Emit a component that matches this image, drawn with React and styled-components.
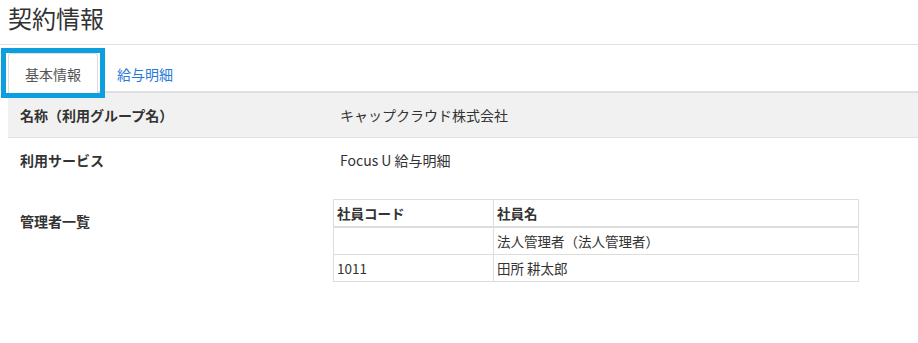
import styled, { createGlobalStyle } from 'styled-components'

const GlobalStyle = createGlobalStyle`
    body {
        margin: 0;
        background: #ffffff;
        font-family: "Noto Sans CJK JP", "Noto Sans", sans-serif;
        color: #333333;
    }
`

const admins = [
    { code: '', name: '法人管理者（法人管理者）' },
    { code: '1011', name: '田所 耕太郎' },
]

const App = () => {
    return (
        <Page>
            <GlobalStyle />
            <Title>契約情報</Title>
            <Body>
                <TabBar>
                    <Tab $active>基本情報</Tab>
                    <Tab>給与明細</Tab>
                </TabBar>
                <Row $shaded>
                    <Label>名称（利用グループ名）</Label>
                    <Value>キャップクラウド株式会社</Value>
                </Row>
                <Row>
                    <Label>利用サービス</Label>
                    <Value>Focus U 給与明細</Value>
                </Row>
                <Row $top>
                    <Label $offset>管理者一覧</Label>
                    <TableCell>
                        <AdminTable>
                            <thead>
                                <tr>
                                    <Th $code>社員コード</Th>
                                    <Th>社員名</Th>
                                </tr>
                            </thead>
                            <tbody>
                                {admins.map((a, i) => (
                                    <tr key={i}>
                                        <Td>{a.code}</Td>
                                        <Td>{a.name}</Td>
                                    </tr>
                                ))}
                            </tbody>
                        </AdminTable>
                    </TableCell>
                </Row>
            </Body>
        </Page>
    )
}

export default App

const Page = styled.div`
    width: 918px;
    min-height: 343px;
    overflow: hidden;
`

const Title = styled.h1`
    margin: 0;
    padding: 0 0 8px 8px;
    font-size: 24px;
    font-weight: 400;
    line-height: 36px;
    color: #333333;
    border-bottom: 1px solid #e0e0e0;
`

const Body = styled.div`
    padding-left: 8px;
`

const TabBar = styled.div`
    display: flex;
    align-items: flex-end;
    gap: 2px;
    height: 38px;
    padding-top: 8px;
    border-bottom: 2px solid #dfdfe1;
`

const Tab = styled.div`
    position: relative;
    box-sizing: border-box;
    height: 40px;
    margin-bottom: -2px;
    padding: 0 16px;
    display: flex;
    align-items: center;
    font-size: 14px;
    color: ${p => (p.$active ? '#555555' : '#2a7bd6')};
    background: ${p => (p.$active ? '#ffffff' : 'transparent')};
    border: 1px solid ${p => (p.$active ? '#dddddd' : 'transparent')};
    border-bottom: none;
    border-radius: 3px 3px 0 0;

    ${p => p.$active && `
        &::after {
            content: '';
            position: absolute;
            top: -6px;
            left: -8px;
            right: -8px;
            bottom: -5px;
            border: 5px solid #0c9fdd;
        }
    `}
`

const Row = styled.div`
    display: grid;
    grid-template-columns: 325px 1fr;
    align-items: ${p => (p.$top ? 'start' : 'center')};
    background: ${p => (p.$shaded ? '#f1f1f1' : '#ffffff')};
    border-bottom: 1px solid ${p => (p.$shaded ? '#e1e1e1' : 'transparent')};
    min-height: 44px;
`

const Label = styled.div`
    padding: ${p => (p.$offset ? '28px' : '12px')} 12px 12px;
    font-size: 14px;
    font-weight: 700;
    line-height: 20px;
    color: #333333;
`

const Value = styled.div`
    padding: 12px 7px;
    font-size: 14px;
    line-height: 20px;
    color: #333333;
`

const TableCell = styled.div`
    padding-top: 16px;
`

const AdminTable = styled.table`
    width: 526px;
    border-collapse: collapse;
    font-size: 13.5px;
    color: #333333;
`

const Th = styled.th`
    width: ${p => (p.$code ? '153px' : 'auto')};
    height: 26px;
    padding: 0 3px;
    text-align: left;
    font-weight: 700;
    border: 1px solid #dddddd;
    border-bottom: 2px solid #dddddd;
`

const Td = styled.td`
    height: 26px;
    padding: 0 3px;
    border: 1px solid #dddddd;
`
